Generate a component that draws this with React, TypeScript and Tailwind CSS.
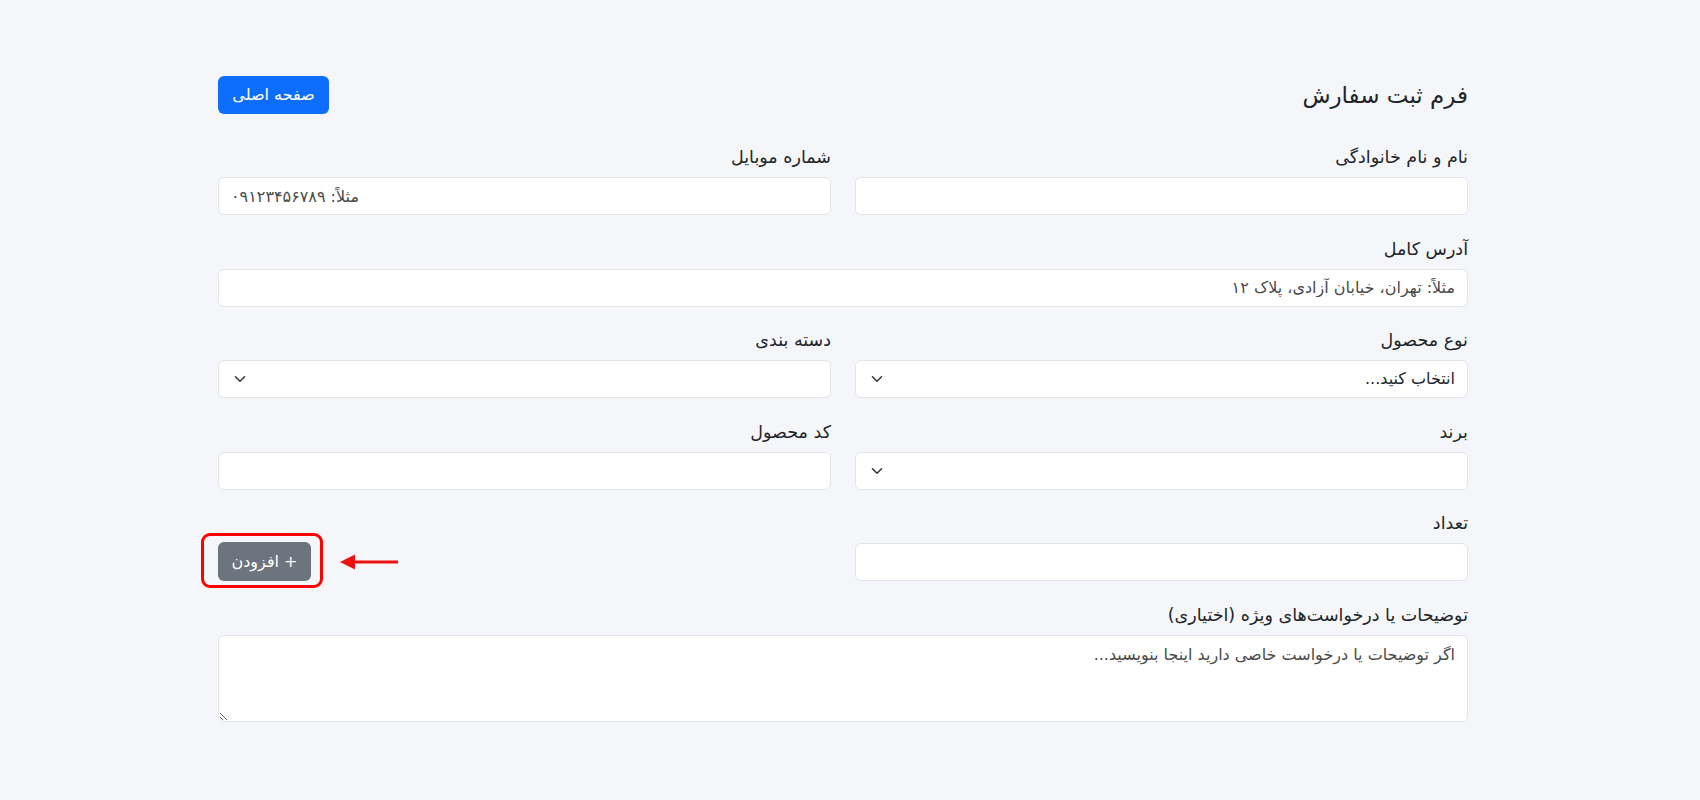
import { useState } from "react";

const fieldClass =
  "w-full h-[38px] bg-white border border-[#e2e4e8] rounded-[6px] px-3 text-[16px] text-[#212529] placeholder:text-[#4a4a4a] focus:outline-none";

function Label({ children }: { children: React.ReactNode }) {
  return <label className="block h-6 leading-6 mb-2 text-[17.5px] text-[#212529]">{children}</label>;
}

function Chevron() {
  return (
    <svg
      className="pointer-events-none absolute left-[16px] top-1/2 -translate-y-1/2"
      width="12"
      height="8"
      viewBox="0 0 12 8"
      fill="none"
    >
      <path d="M1.5 1.8 6 6.2 10.5 1.8" stroke="#343a40" strokeWidth="1.6" strokeLinecap="round" strokeLinejoin="round" />
    </svg>
  );
}

function SelectField({ label, placeholder }: { label: string; placeholder?: string }) {
  return (
    <div>
      <Label>{label}</Label>
      <div className="relative">
        <select className={fieldClass + " appearance-none pl-9"} defaultValue="">
          <option value="">{placeholder ?? ""}</option>
        </select>
        <Chevron />
      </div>
    </div>
  );
}

function TextField({ label, placeholder, ltr }: { label: string; placeholder?: string; ltr?: boolean }) {
  return (
    <div>
      <Label>{label}</Label>
      <input type="text" dir={ltr ? "ltr" : undefined} className={fieldClass} placeholder={placeholder} />
    </div>
  );
}

export default function App() {
  const [notes, setNotes] = useState("");

  return (
    <div dir="rtl" className="min-h-screen bg-[#f5f6f9] font-['DejaVu_Sans',sans-serif] text-[#212529]">
      <div className="w-[1250px] mr-[232px] pt-[76px] pb-10">
        {/* سربرگ */}
        <div className="flex items-center justify-between">
          <h1 className="text-[23px] leading-[38px] font-normal">فرم ثبت سفارش</h1>
          <button className="h-[38px] w-[111px] rounded-[6px] bg-[#0d6efd] text-white text-[16px]">
            صفحه اصلی
          </button>
        </div>

        <div className="mt-[31px] grid grid-cols-2 gap-x-6 gap-y-[21.5px]">
          <TextField label="نام و نام خانوادگی" />
          <TextField label="شماره موبایل" placeholder="مثلاً: ۰۹۱۲۳۴۵۶۷۸۹" ltr />

          <div className="col-span-2">
            <TextField label="آدرس کامل" placeholder="مثلاً: تهران، خیابان آزادی، پلاک ۱۲" />
          </div>

          <SelectField label="نوع محصول" placeholder="انتخاب کنید..." />
          <SelectField label="دسته بندی" />

          <SelectField label="برند" />
          <TextField label="کد محصول" />

          <TextField label="تعداد" />
          <div className="flex items-end justify-end">
            <div className="relative">
              <button className="h-[39px] w-[93px] rounded-[6px] bg-[#6c757d] text-white text-[16px]">
                + افزودن
              </button>
              {/* کادر قرمز راهنما */}
              <div className="pointer-events-none absolute -left-[17px] -right-[12px] -top-[9px] -bottom-[7px] border-[3px] border-[#ff0000] rounded-[9px]" />
              <svg
                className="pointer-events-none absolute left-[122px] top-1/2 -translate-y-1/2"
                width="58"
                height="16"
                viewBox="0 0 58 16"
              >
                <path d="M14 6.5H58v3H14z" fill="#ee1111" />
                <path d="M0 8 15 0.5v15z" fill="#ee1111" />
              </svg>
            </div>
          </div>

          <div className="col-span-2">
            <Label>توضیحات یا درخواست‌های ویژه (اختیاری)</Label>
            <textarea
              rows={3}
              value={notes}
              onChange={(e) => setNotes(e.target.value)}
              placeholder="اگر توضیحات یا درخواست خاصی دارید اینجا بنویسید..."
              className="block w-full h-[87px] bg-white border border-[#e2e4e8] rounded-[6px] px-3 py-[7px] text-[16px] leading-6 placeholder:text-[#4a4a4a] focus:outline-none"
            />
          </div>
        </div>
      </div>
    </div>
  );
}
